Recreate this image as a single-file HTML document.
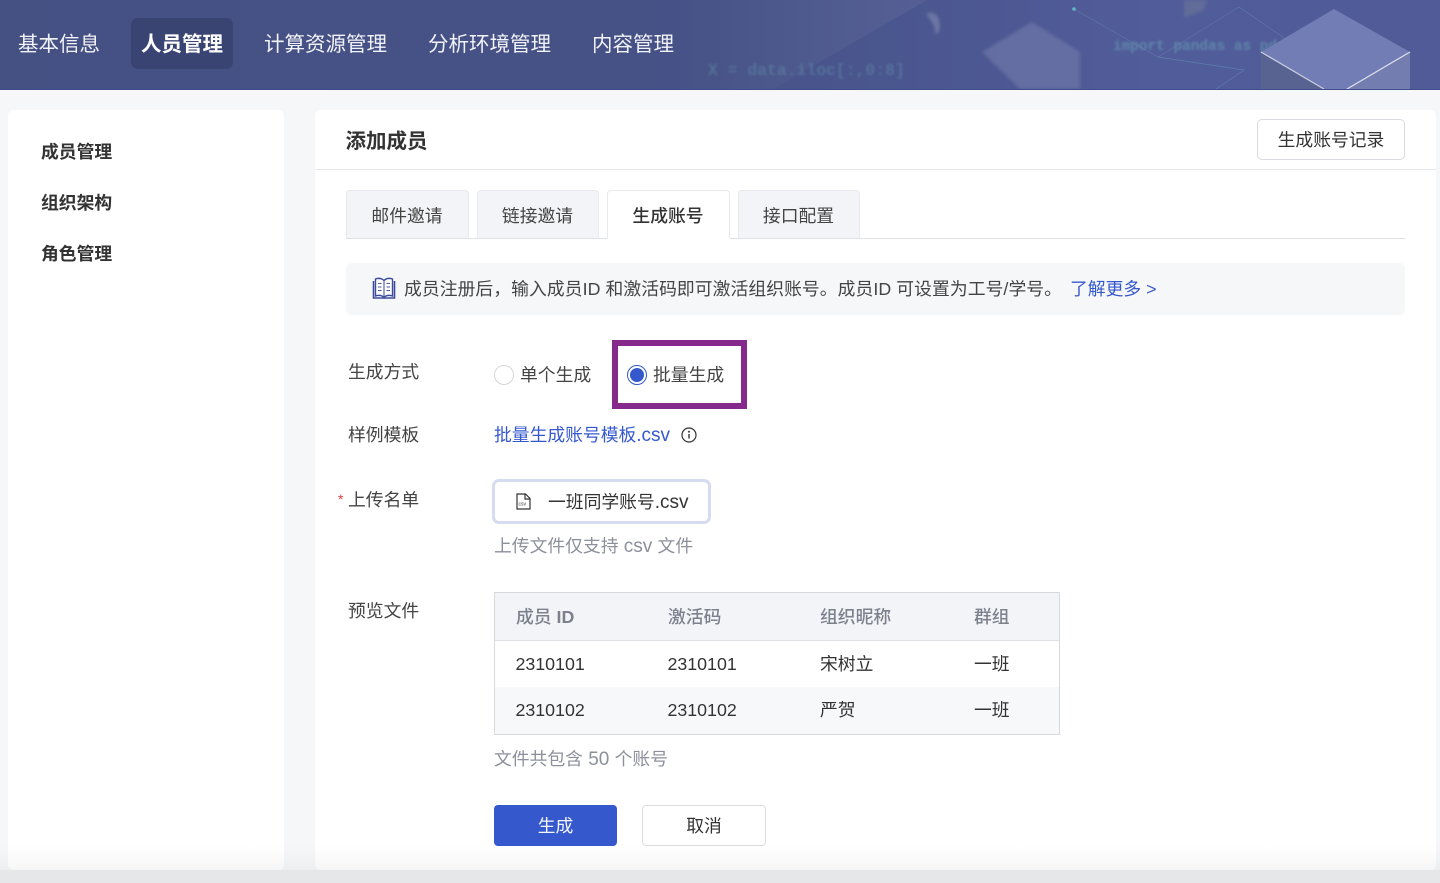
<!DOCTYPE html>
<html lang="zh-CN"><head><meta charset="utf-8"><title>添加成员</title>
<style>
html,body{margin:0;padding:0}
body{position:relative;width:1440px;height:883px;overflow:hidden;background:#f6f7f9;font-family:"Liberation Sans","Noto Sans CJK SC",sans-serif;color:#333;-webkit-font-smoothing:antialiased}
.a{position:absolute;white-space:nowrap;line-height:1}
.box{position:absolute;box-sizing:border-box}
.nav{color:#f2f3f8;font-size:20.5px;top:34.5px}
.side{font-size:17.8px;font-weight:700;color:#333;left:41px}
.lab{font-size:17.8px;color:#444;left:348px}
.tab{position:absolute;box-sizing:border-box;top:190px;height:49px;background:#f3f4f7;border:1px solid #e8e9ec;border-bottom:1px solid #dfe0e4;border-radius:4px 4px 0 0;font-size:17.8px;color:#444;text-align:center;line-height:50px}
.th{font-size:17.8px;color:#7d818d;font-weight:500;top:609px}
.td{font-size:17.8px;color:#333}
.l{font-size:19px}
</style></head><body>

<div class="box" style="left:0;top:0;width:1440px;height:90px;background:linear-gradient(90deg,#455183 0%,#465287 50%,#515c9a 80%,#505b98 100%);border-bottom:1px solid #404c8e;overflow:hidden">
<svg width="1440" height="89" style="position:absolute;left:0;top:0">
<defs><filter id="b"><feGaussianBlur stdDeviation="1.500"/></filter><filter id="t"><feGaussianBlur stdDeviation="1"/></filter>
<linearGradient id="g" x1="0" x2="1" y1="0" y2="0"><stop offset="0" stop-color="#7a7fa6" stop-opacity="0"/><stop offset="1" stop-color="#7a7fa6" stop-opacity=".22"/></linearGradient></defs>
<polygon points="773,89 927,0 660,0 660,89" fill="url(#g)"/>
<path d="M926 14q10-4 13 6q2 9-1 13l-3 1q1-9-9-20z" fill="#7d84ab" opacity=".7" filter="url(#b)"/>
<polygon points="982,52 1032,22 1080,52 1080,89 1020,89" fill="#6e77a8" opacity=".7" filter="url(#b)"/>
<polygon points="1184,0 1207,0 1204,10 1184,18" fill="#6a7399" opacity=".7" filter="url(#b)"/>
<polyline points="1074,9 1158,57 1239,7 1290,42" fill="none" stroke="#6b8fb8" stroke-width=".7" opacity=".5"/>
<polyline points="1158,57 1244,70 1216,89" fill="none" stroke="#6b9fc0" stroke-width=".7" opacity=".5"/>
<circle cx="1074" cy="9" r="1.800" fill="#5fb8c4"/>
<text x="1113" y="50" font-family="Liberation Mono,monospace" font-size="14.4" font-weight="700" fill="#6aa8b8" opacity=".55" filter="url(#t)">import pandas as pd</text>
<text x="708" y="75" font-family="Liberation Mono,monospace" font-size="16.4" font-weight="700" fill="#6aa8b8" opacity=".33" filter="url(#t)">X = data.iloc[:,0:8]</text>
<polygon points="1261,52 1324,89 1261,89" fill="#5b668f" opacity=".75"/>
<polygon points="1410,52 1410,89 1347,89" fill="#7a84b3" opacity=".85"/>
<polygon points="1261,52 1334,9 1410,52 1336,96" fill="#727cb5"/>
<polyline points="1261,52 1324,89" fill="none" stroke="#c8cce0" stroke-width="1.300"/>
<polyline points="1410,52 1347,89" fill="none" stroke="#d8dbe8" stroke-width="1.300"/>
</svg>
</div>

<div class="box" style="left:131px;top:18px;width:102px;height:51px;background:#3a4473;border-radius:7px"></div>
<div class="a nav" style="left:18px">基本信息</div>
<div class="a nav" style="left:141px;font-weight:700;color:#fff">人员管理</div>
<div class="a nav" style="left:264px">计算资源管理</div>
<div class="a nav" style="left:428px">分析环境管理</div>
<div class="a nav" style="left:592px">内容管理</div>

<div class="box" style="left:8px;top:110px;width:276px;height:760px;background:#fff;border-radius:6px"></div>
<div class="a side" style="top:143.5px">成员管理</div>
<div class="a side" style="top:194.500px">组织架构</div>
<div class="a side" style="top:245.500px">角色管理</div>

<div class="box" style="left:315px;top:110px;width:1121px;height:760px;background:#fff;border-radius:6px"></div>
<div class="a" style="left:345.500px;top:131.500px;font-size:20.500px;font-weight:700;color:#333">添加成员</div>
<div class="box" style="left:315px;top:169px;width:1121px;height:1px;background:#e6e7ea"></div>
<div class="box" style="left:1257px;top:119px;width:148px;height:41px;border:1px solid #d9dbe0;border-radius:5px;background:#fff;font-size:17.8px;color:#333;text-align:center;line-height:41px">生成账号记录</div>

<div class="box" style="left:346px;top:238px;width:1059px;height:1px;background:#e0e1e5"></div>
<div class="tab" style="left:345.500px;width:123px">邮件邀请</div>
<div class="tab" style="left:476.500px;width:122px">链接邀请</div>
<div class="tab" style="left:606.500px;width:123px;background:#fff;border-bottom-color:#fff;font-weight:500;color:#333">生成账号</div>
<div class="tab" style="left:737.500px;width:122px">接口配置</div>

<div class="box" style="left:346px;top:263px;width:1059px;height:52px;background:#f6f7f9;border-radius:5px"></div>
<svg class="box" style="left:372px;top:277px" width="24" height="23" viewBox="0 0 24 23">
<path d="M1.5 4v17h21V4" fill="#fff" stroke="#3c4a9c" stroke-width="1.6"/>
<path d="M3.5 2c3-1 6-1 8.500 1.500C14.500 1 17.500 1 20.500 2v17c-3-1-6-1-8.500 1.300C9.500 18 6.500 18 3.500 19z" fill="#fff" stroke="#3c4a9c" stroke-width="1.400"/>
<path d="M12 3.500v16.500M6 6.500h3.500M6 10h3.500M6 13.500h3.500M14.500 6.500H18M14.500 10H18M14.500 13.500H18" stroke="#4a58a8" stroke-width="1.100" fill="none"/>
</svg>
<div class="a" style="left:404px;top:281px;font-size:17.8px;color:#444;letter-spacing:.075px">成员注册后，输入成员ID 和激活码即可激活组织账号。成员ID 可设置为工号/学号。</div>
<div class="a" style="left:1070px;top:281px;font-size:17.8px;color:#3559cd">了解更多 &gt;</div>

<div class="a lab" style="top:364px">生成方式</div>
<div class="box" style="left:494px;top:365px;width:20px;height:20px;border:1px solid #d5d6da;border-radius:50%;background:#fff"></div>
<div class="a" style="left:520px;top:366.500px;font-size:17.8px;color:#444">单个生成</div>
<div class="box" style="left:612px;top:340px;width:135px;height:69px;border:6px solid #86298c"></div>
<div class="box" style="left:627px;top:365px;width:20px;height:20px;border:1px solid #3559cd;border-radius:50%;background:#fff"></div>
<div class="box" style="left:630px;top:368px;width:14px;height:14px;border-radius:50%;background:#3559cd"></div>
<div class="a" style="left:653px;top:366.500px;font-size:17.8px;color:#444">批量生成</div>

<div class="a lab" style="top:426.500px">样例模板</div>
<div class="a" style="left:494px;top:425.500px;font-size:17.8px;color:#3559cd">批量生成账号模板<span class="l">.csv</span></div>
<svg class="box" style="left:681px;top:426.500px" width="16" height="16" viewBox="0 0 16 16"><circle cx="8" cy="8" r="7" fill="none" stroke="#333" stroke-width="1.200"/><path d="M8 7v4.500" stroke="#333" stroke-width="1.400"/><circle cx="8" cy="4.700" r="1" fill="#333"/></svg>

<div class="a" style="left:338px;top:492px;font-size:14px;color:#e0403c">*</div>
<div class="a lab" style="top:491.500px">上传名单</div>
<div class="box" style="left:492px;top:479px;width:219px;height:45px;border:3px solid #d5dcf2;border-radius:7px;background:#fff"></div>
<svg class="box" style="left:516px;top:493px" width="15" height="17" viewBox="0 0 15 17"><path d="M1 1h8.500L14 5.500V16H1z" fill="#fff" stroke="#333" stroke-width="1.200"/><path d="M9 1v5h5" fill="none" stroke="#333" stroke-width="1.200"/><text x="2.500" y="12.500" font-size="5" font-family="Liberation Sans,sans-serif" fill="#333">csv</text></svg>
<div class="a" style="left:548px;top:493px;font-size:17.8px;color:#333">一班同学账号<span class="l">.csv</span></div>
<div class="a" style="left:494px;top:537px;font-size:17.8px;color:#8c909b">上传文件仅支持<span class="l"> csv </span>文件</div>

<div class="a lab" style="top:602.500px">预览文件</div>
<div class="box" style="left:494px;top:592px;width:566px;height:143px;border:1px solid #d8d9dd;background:#fff"></div>
<div class="box" style="left:495px;top:593px;width:564px;height:48px;background:#f3f4f8;border-bottom:1px solid #dfe0e4"></div>
<div class="box" style="left:495px;top:687px;width:564px;height:47px;background:#f7f8fa"></div>
<div class="a th" style="left:516px">成员 <b>ID</b></div>
<div class="a th" style="left:668px">激活码</div>
<div class="a th" style="left:820px">组织昵称</div>
<div class="a th" style="left:974px">群组</div>
<div class="a td" style="left:515.500px;top:656px">2310101</div>
<div class="a td" style="left:667.500px;top:656px">2310101</div>
<div class="a td" style="left:820px;top:656px">宋树立</div>
<div class="a td" style="left:974px;top:656px">一班</div>
<div class="a td" style="left:515.500px;top:702px">2310102</div>
<div class="a td" style="left:667.500px;top:702px">2310102</div>
<div class="a td" style="left:820px;top:702px">严贺</div>
<div class="a td" style="left:974px;top:702px">一班</div>
<div class="a" style="left:494px;top:750px;font-size:17.8px;color:#8c909b">文件共包含<span class="l"> 50 </span>个账号</div>

<div class="box" style="left:494px;top:805px;width:123px;height:41px;background:#3559cd;border-radius:4px;color:#f4f6fd;font-size:17.8px;text-align:center;line-height:43px">生成</div>
<div class="box" style="left:642px;top:805px;width:124px;height:41px;background:#fff;border:1px solid #dcdde1;border-radius:4px;color:#333;font-size:17.8px;text-align:center;line-height:41px">取消</div>

<div class="box" style="left:0;top:845px;width:1440px;height:25px;background:linear-gradient(180deg,rgba(0,0,0,0),rgba(0,0,0,.035))"></div>
<div class="box" style="left:0;top:870px;width:1440px;height:13px;background:#e6e7e9"></div>
</body></html>
